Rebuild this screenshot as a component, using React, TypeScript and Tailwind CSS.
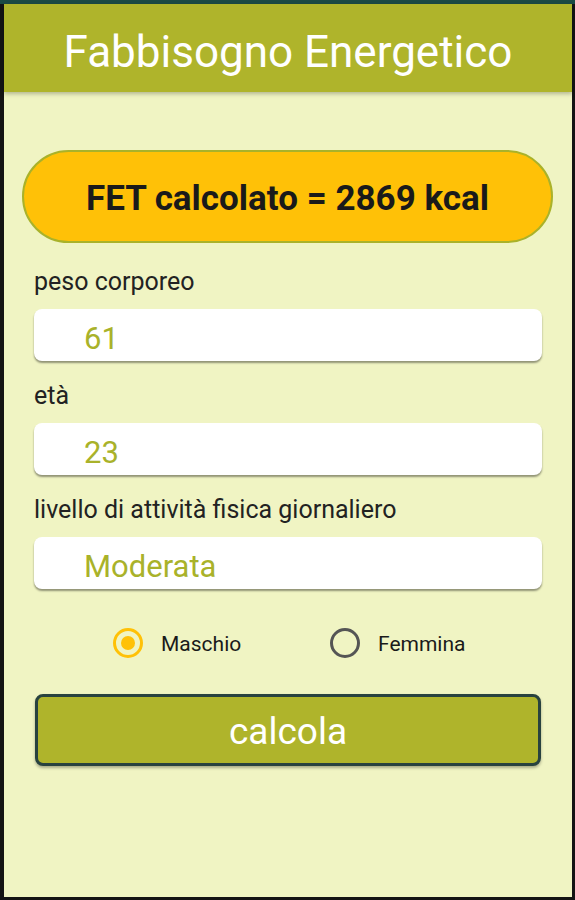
import { useState } from 'react';

const font = { fontFamily: 'Roboto, "Noto Sans", sans-serif' };

const Field = ({ label, value }: { label: string; value: string }) => (
  <div className="flex flex-col">
    <div className="mt-[23px] h-[24px] whitespace-nowrap pl-[30px] text-[25px] leading-[24px] text-[#222]">{label}</div>
    <div className="ml-[30px] mr-[30px] mt-[15px] flex h-[52px] items-center rounded-[8px] bg-white pl-[50px] pt-[6px] shadow-[0_2px_2px_rgba(0,0,0,0.4)]">
      <span className="text-[31px] leading-none text-[#a9b22a]">{value}</span>
    </div>
  </div>
);

const Radio = ({ label, checked, onClick }: { label: string; checked: boolean; onClick: () => void }) => (
  <button type="button" onClick={onClick} className="flex items-center gap-[18px]">
    <span
      className={`flex h-[30px] w-[30px] items-center justify-center rounded-full border-[3px] ${checked ? 'border-[#ffc107]' : 'border-[#555]'}`}
    >
      {checked && <span className="h-[14px] w-[14px] rounded-full bg-[#ffc107]" />}
    </span>
    <span className="pt-[2px] text-[21px] leading-none text-[#1a1a1a]">{label}</span>
  </button>
);

export default function App() {
  const [sex, setSex] = useState<'m' | 'f'>('m');

  return (
    <div className="flex h-[900px] w-[575px] flex-col bg-[#141414]" style={font}>
      <div className="h-[4px] bg-[#1b4a44]" />
      <div className="mb-[3px] ml-[4px] mr-[3px] flex flex-1 flex-col bg-[#f0f4c3]">
        <header className="flex h-[88px] items-center justify-center bg-[#afb42b] pt-[8px] shadow-[0_2px_4px_rgba(0,0,0,0.25)]">
          <h1 className="text-[44px] font-normal leading-none text-white">Fabbisogno Energetico</h1>
        </header>

        <div className="ml-[18px] mr-[19px] mt-[58px] flex h-[93px] items-center justify-center rounded-full border-2 border-[#a9b22a] bg-[#ffc107] pt-[4px]">
          <span className="text-[35px] font-bold leading-none text-[#1a1a1a]">FET calcolato = 2869 kcal</span>
        </div>

        <div className="mt-[4px]">
          <Field label="peso corporeo" value="61" />
          <Field label="età" value="23" />
          <Field label="livello di attività fisica giornaliero" value="Moderata" />
        </div>

        <div className="mt-[39px] flex h-[30px] items-center pl-[109px]">
          <div className="w-[217px]">
            <Radio label="Maschio" checked={sex === 'm'} onClick={() => setSex('m')} />
          </div>
          <Radio label="Femmina" checked={sex === 'f'} onClick={() => setSex('f')} />
        </div>

        <button
          type="button"
          className="ml-[31px] mr-[31px] mt-[36px] flex h-[72px] items-center justify-center rounded-[8px] border-[3px] border-[#28423f] bg-[#afb42b] pt-[2px] shadow-[0_2px_3px_rgba(0,0,0,0.3)]"
        >
          <span className="text-[37px] leading-none text-white">calcola</span>
        </button>
      </div>
    </div>
  );
}
